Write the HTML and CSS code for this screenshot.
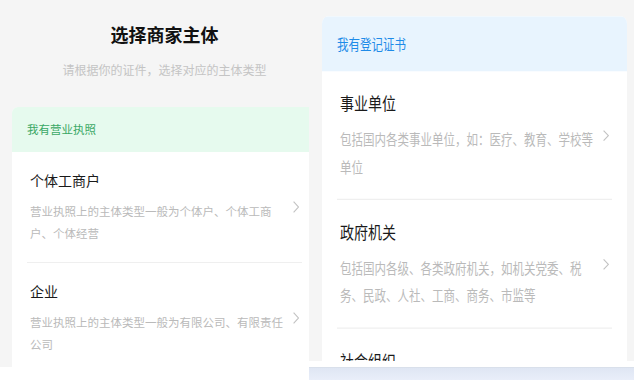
FILE: index.html
```html
<!DOCTYPE html>
<html lang="zh-CN">
<head>
<meta charset="utf-8">
<link rel="stylesheet" href="styles.css">
</head>
<body>
<div class="wrap">
  <div class="col col-left">
    <div class="screen screen-left">
      <div class="page page-left">
        <h1 class="title">选择商家主体</h1>
        <p class="subtitle">请根据你的证件，选择对应的主体类型</p>
        <div class="card">
          <div class="card-head head-green">我有营业执照</div>
          <div class="item">
            <div class="item-main">
              <div class="item-title">个体工商户</div>
              <div class="item-desc">营业执照上的主体类型一般为个体户、个体工商户、个体经营</div>
            </div>
            <svg class="chev" viewBox="0 0 6 12"><polyline points="0.6,0.6 5.4,6 0.6,11.4" fill="none" stroke="#c2c2c2" stroke-width="1.1"/></svg>
          </div>
          <div class="item">
            <div class="item-main">
              <div class="item-title">企业</div>
              <div class="item-desc">营业执照上的主体类型一般为有限公司、有限责任公司</div>
            </div>
            <svg class="chev" viewBox="0 0 6 12"><polyline points="0.6,0.6 5.4,6 0.6,11.4" fill="none" stroke="#c2c2c2" stroke-width="1.1"/></svg>
          </div>
        </div>
      </div>
    </div>
    <div class="strip"></div>
  </div>
  <div class="col col-right">
    <div class="screen screen-right">
      <div class="page page-right">
        <div class="card card-right">
          <div class="card-head head-blue">我有登记证书</div>
          <div class="item item-r">
            <div class="item-main">
              <div class="item-title">事业单位</div>
              <div class="item-desc">包括国内各类事业单位，如：医疗、教育、学校等单位</div>
            </div>
            <svg class="chev chev-r" viewBox="0 0 6 12" preserveAspectRatio="none"><polyline points="0.6,0.6 5.4,6 0.6,11.4" fill="none" stroke="#c2c2c2" stroke-width="1.1"/></svg>
          </div>
          <div class="item item-r">
            <div class="item-main">
              <div class="item-title">政府机关</div>
              <div class="item-desc">包括国内各级、各类政府机关，如机关党委、税务、民政、人社、工商、商务、市监等</div>
            </div>
            <svg class="chev chev-r" viewBox="0 0 6 12" preserveAspectRatio="none"><polyline points="0.6,0.6 5.4,6 0.6,11.4" fill="none" stroke="#c2c2c2" stroke-width="1.1"/></svg>
          </div>
          <div class="item item-r">
            <div class="item-main">
              <div class="item-title">社会组织</div>
            </div>
          </div>
        </div>
      </div>
    </div>
    <div class="gap-white"></div>
    <div class="bar"></div>
  </div>
</div>
</body>
</html>
```

FILE: styles.css
```css
html, body {
  margin: 0;
  padding: 0;
  background: #ffffff;
  font-family: "Noto Sans CJK SC", "Noto Sans", sans-serif;
}

.wrap {
  display: flex;
  width: 634px;
  height: 380px;
  overflow: hidden;
}

.col {
  display: flex;
  flex-direction: column;
  flex: none;
}

.col-left {
  width: 309px;
}

.col-right {
  width: 325px;
}

.screen {
  overflow: hidden;
  background: #f5f5f5;
  flex: none;
}

.screen-left {
  height: 367px;
}

.screen-right {
  height: 361px;
}

.page-left {
  width: 329px;
  padding-top: 21px;
}

.title {
  margin: 0;
  text-align: center;
  font-size: 18px;
  line-height: 26px;
  font-weight: 700;
  color: #111111;
}

.subtitle {
  margin: 14px 0 0;
  text-align: center;
  font-size: 12px;
  line-height: 18px;
  color: #c4c4c4;
}

.card {
  margin: 28px 12px 0;
  background: #ffffff;
  border-radius: 6px 6px 0 0;
  overflow: hidden;
}

.card-head {
  height: 45px;
  line-height: 45px;
  padding-left: 15px;
  font-size: 11.5px;
}

.head-green {
  background: #e6faee;
  color: #3aa865;
}

.item {
  display: flex;
  align-items: center;
  gap: 8px;
  margin: 0 15px;
  padding: 18px 3px;
}

.item:not(:last-child) {
  border-bottom: 1px solid #efefef;
}

.item-main {
  flex: 1;
  min-width: 0;
}

.item-title {
  font-size: 14px;
  line-height: 20px;
  color: #1a1a1a;
}

.item-desc {
  margin-top: 10px;
  font-size: 11.5px;
  line-height: 22px;
  color: #bababa;
}

.chev {
  flex: none;
  width: 6px;
  height: 12px;
}

.strip {
  flex: 1;
  background: #ffffff;
}

/* right screen: rendered vertically stretched */
.page-right {
  transform: scaleY(1.25);
  transform-origin: top left;
  padding-top: 13px;
}

.card-right {
  margin: 0 7px 0 13px;
}

.head-blue {
  height: 44px;
  line-height: 44px;
  background: #e8f4fe;
  color: #1e8be8;
}

.item-r {
  padding: 15px 3px 15px;
}

.item-r .item-desc {
  margin-top: 8px;
}

.chev-r {
  height: 9px;
}

.gap-white {
  height: 6px;
  background: #ffffff;
  flex: none;
}

.bar {
  flex: 1;
  border-top: 1px solid #d9e0eb;
  background: linear-gradient(#dfe6f3, #e9eef9);
}
```
